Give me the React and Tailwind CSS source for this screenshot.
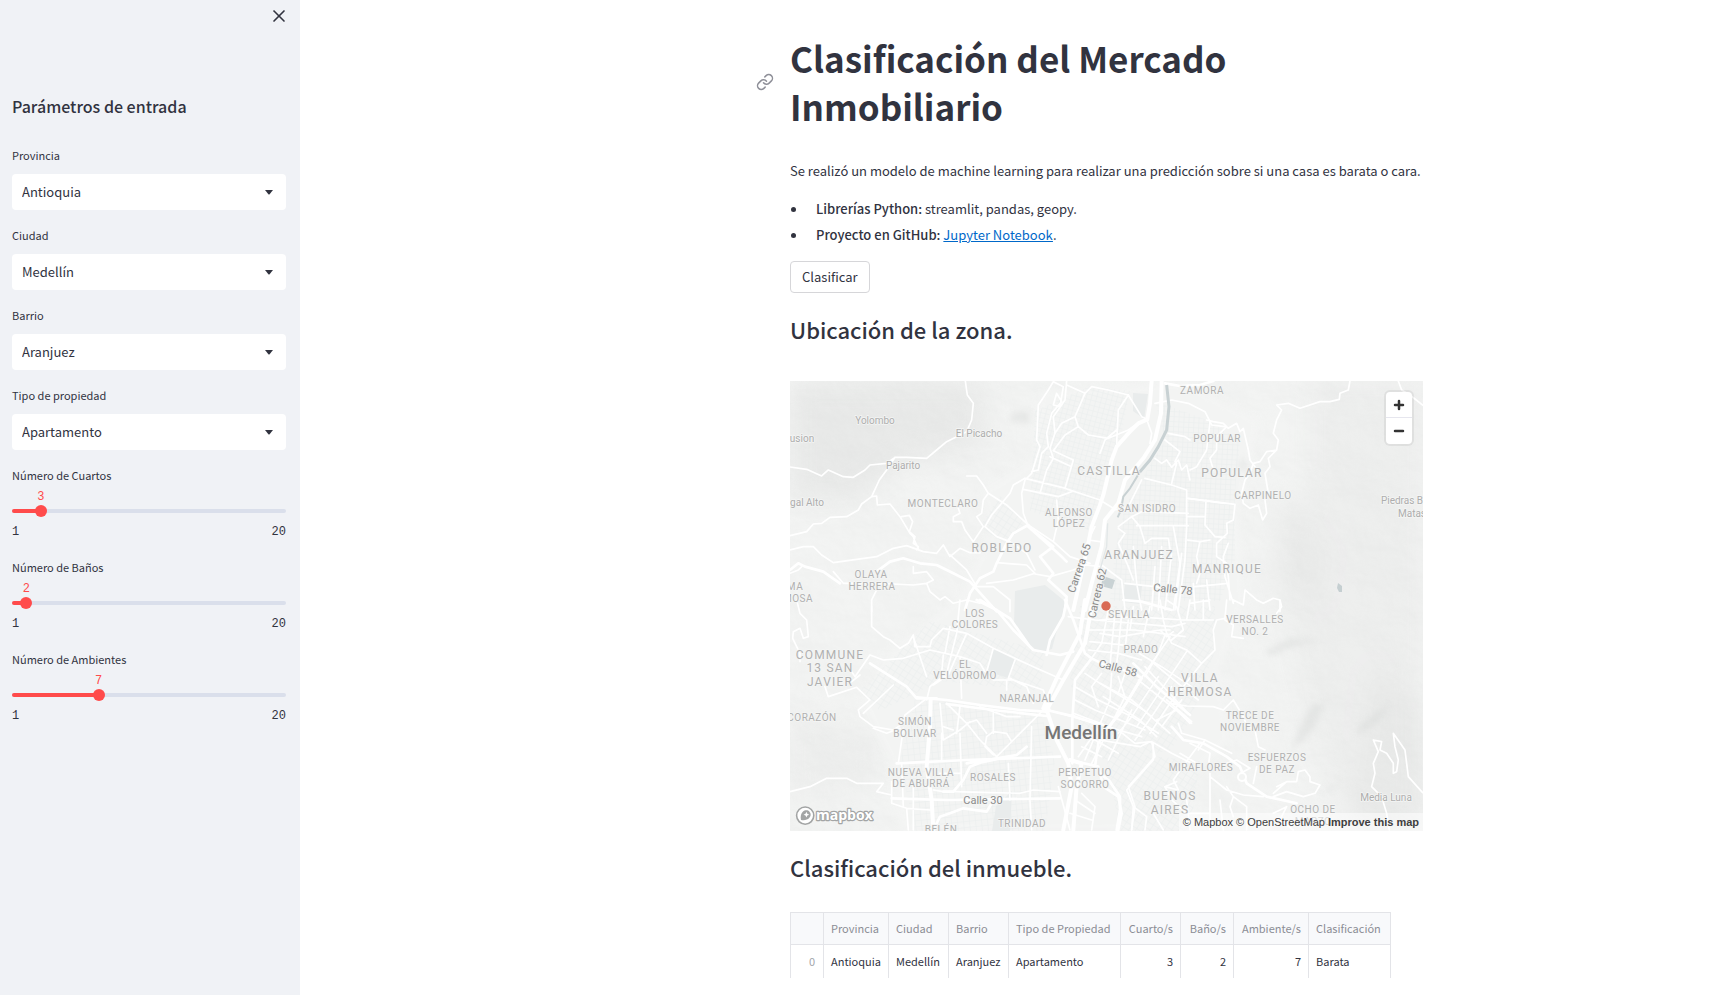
import { useState } from "react";
import { Link, X } from "lucide-react";

const SELECTS = [
  { id: "provincia", label: "Provincia", options: ["Antioquia"] },
  { id: "ciudad", label: "Ciudad", options: ["Medellín"] },
  { id: "barrio", label: "Barrio", options: ["Aranjuez"] },
  { id: "tipo", label: "Tipo de propiedad", options: ["Apartamento"] },
];

const SLIDERS = [
  { id: "cuartos", label: "Número de Cuartos", value: 3 },
  { id: "banos", label: "Número de Baños", value: 2 },
  { id: "ambientes", label: "Número de Ambientes", value: 7 },
];

const COLUMNS = [
  { name: "Provincia", value: "Antioquia", width: "w-[65px]" },
  { name: "Ciudad", value: "Medellín", width: "w-[60px]" },
  { name: "Barrio", value: "Aranjuez", width: "w-[60px]" },
  { name: "Tipo de Propiedad", value: "Apartamento", width: "w-[112px]" },
  { name: "Cuarto/s", value: "3", width: "w-[60px]", numeric: true },
  { name: "Baño/s", value: "2", width: "w-[53px]", numeric: true },
  { name: "Ambiente/s", value: "7", width: "w-[75px]", numeric: true },
  { name: "Clasificación", value: "Barata", width: "w-[82px]" },
];

/* Street network, one sheet per map sector. */
const SHEETS = [
  {
    id: "noroeste",
    transform: "translate(-10 -11) scale(0.3333)",
    minor: [
      "M556 33L562 75L580 100L575 150L560 185L500 215L470 240L440 265L380 262L345 262L320 280L270 285L255 300L220 322L190 320L145 300L125 318L80 298L30 291",
      "M345 262L320 300L298 330L275 380L245 402L235 420L200 440L150 442L125 460L100 462L80 485L30 497",
      "M275 380L290 378L292 405L330 402L360 440L390 490L400 500L405 515L415 535",
      "M365 440L388 436L398 455L388 485L405 500L400 520L415 530L410 540",
      "M30 540L70 530L100 530L125 555L160 578L230 568L290 560L340 535L380 527L430 545L470 550L490 525L510 560L540 535L570 548L600 548",
      "M160 605L190 640L300 640L400 645L440 640L450 665L480 690L495 680L520 700L560 690L600 700",
      "M400 590L400 610L440 605L460 630L440 640",
      "M30 610L55 600L65 590",
      "M275 725L275 690L290 660",
      "M560 318L590 318L610 345L625 370L610 390L605 430L590 440L610 470L580 515L555 480L545 455L520 455L520 440L540 430L535 415",
      "M625 370L680 405L745 465L820 515L870 560L930 580",
      "M735 325L700 345L690 370L665 400L635 435L615 470L650 500L690 515L740 550L765 600",
      "M510 555L560 600L590 650L640 650L690 690L690 725",
      "M650 578L740 585L765 610L700 630L620 640",
      "M765 612L810 620L880 600L930 580",
      "M830 390L835 450L820 515",
    ],
    major: [
      "M30 600L55 580L75 590L130 605L180 640",
      "M290 605L330 575L370 565L420 580L470 585L520 610L570 635L610 680L650 724",
      "M745 465L700 490L680 520L650 580L640 605L600 625L570 670L555 720",
    ],
  },
  {
    id: "castilla",
    transform: "translate(195 -1) scale(0.3333)",
    minor: [
      "M205 5L190 30L160 75L155 180L165 200L140 280L120 300L110 340L115 400L130 440",
      "M205 5L235 20L225 80L205 75L215 40L230 65L200 100L185 160L190 200L170 220L160 270L140 275",
      "M245 3L240 60L205 110L210 160L195 205L205 235L185 270L165 340",
      "M205 212L265 240L240 325",
      "M195 230L255 258",
      "M205 212L240 165L280 140L270 110L230 130L210 160",
      "M280 140L310 165L370 175L430 150L465 125",
      "M300 40L320 20L370 30L430 45",
      "M245 15L300 40L270 110",
      "M430 45L400 90L395 190",
      "M120 295L230 322L345 360L385 385",
      "M115 328L220 350L260 335",
      "M430 45L470 110L487 118",
      "M395 150L360 180L345 220",
      "M485 118L500 160L495 190",
      "M510 70L560 60L610 70L660 95L680 135L720 140",
      "M550 160L600 170L615 180",
      "M540 180L585 215L570 245",
      "M480 295L560 315L605 330L605 440L600 540L580 690",
      "M510 235L530 250L545 240L560 262L580 240L590 270L605 255L615 300",
      "M560 310L575 250",
      "M385 390L420 385L435 370L470 300",
      "M400 440L440 410L470 395L610 400",
      "M455 437L610 437",
      "M400 445L420 460L400 490L430 560L445 600",
      "M440 410L465 440L480 490L500 475L550 475L560 540",
      "M350 555L410 600L420 690",
      "M420 610L510 620L580 630",
      "M445 500L455 610L470 690",
      "M510 560L500 690",
      "M530 500L520 690",
      "M560 520L540 690",
      "M590 520L570 690",
      "M610 355L720 370",
      "M310 480L345 485M300 555L350 560M330 440L315 470",
    ],
    major: [
      "M130 440L225 525L245 545",
      "M130 440L205 500L165 530L205 580L190 600L245 650L240 690",
      "M415 660L470 665L560 690",
    ],
    trunk: [
      "M500 2L495 70L487 118L460 130L430 160L395 200L380 240L355 345L345 375L320 440L310 490L285 600L265 690",
      "M530 2L528 100L510 180L475 235L420 300L400 370L360 420L350 500L320 610L300 690",
    ],
  },
  {
    id: "noreste",
    transform: "translate(310 -11) scale(0.3333)",
    minor: [
      "M750 33L745 60L720 70L718 88L690 95L660 95L600 115L565 100L530 105L545 120L530 150L520 190L535 210L530 240L505 265L510 290L495 310L505 370L495 390L500 430L488 450",
      "M530 240L500 245L480 275L460 280L450 310L435 330L425 370L430 400L450 415L475 405L488 450",
      "M895 33L905 60L930 75L968 105",
      "M320 150L340 155L370 160L385 175L410 160L420 185L430 175L445 240L450 270L465 290",
      "M330 155L320 240L290 290L270 300",
      "M380 170L350 200L350 240L330 265L340 300",
      "M262 385L405 403L400 450L380 460L382 490L350 520L350 560L380 580L385 620L390 690",
      "M318 390L315 465L345 500L375 502",
      "M262 510L300 515L330 510",
      "M262 440L315 440",
      "M300 515L290 560L300 610L290 640",
      "M220 470L240 580L220 720",
      "M385 520L370 560L375 620L400 700",
      "M400 690L430 705L435 660L470 690L490 700L520 685L540 690L540 725",
      "M320 630L330 720M280 640L285 720M285 650L385 640M270 700L330 690",
    ],
    major: ["M195 40L240 48L300 45L340 33"],
  },
  {
    id: "suroeste",
    transform: "translate(-10 219) scale(0.3333)",
    minor: [
      "M50 0L60 40L80 60L85 110L70 115L60 85L40 95L38 115L60 160L60 185",
      "M275 20L275 80L310 110L330 120L360 145L385 130L400 105L405 140L450 140L455 120L490 85L560 100L640 145L760 200L850 240",
      "M270 165L310 180L370 175L450 150L540 170L600 190L612 210",
      "M270 165L225 230L215 215M215 245L240 225",
      "M145 290L230 262L270 300L235 330L240 350L280 380L340 390L370 370L375 345L440 295",
      "M280 385L320 400L360 385",
      "M145 290L135 260M340 255L250 340",
      "M540 0L530 100L500 220L450 260L440 300",
      "M510 80L495 160M560 100L520 190L505 225L460 255",
      "M400 110L440 230M540 170L545 295M490 165L485 220",
      "M500 310L560 370L600 420L650 470L700 420L740 380L790 330",
      "M560 370L590 360L620 400M640 395L620 410L615 440L640 465M640 395L680 400L695 425",
      "M480 310L490 420L540 390L570 365M490 380L520 390M540 320L530 400",
      "M370 385L355 490M485 400L485 480M540 400L545 560",
      "M335 545L335 610L380 625L450 630",
      "M30 575L90 560L140 535L200 535L230 550L310 550L290 575L335 585L335 610",
      "M520 575L720 580L760 570L840 575",
      "M685 490L690 600M755 380L750 600L755 690M380 625L385 690M365 490L370 620M400 560L400 690",
      "M680 240L680 270M610 210L640 240L700 240L790 270L810 330M690 235L740 260L760 310",
      "M640 330L640 400M600 320L680 350L720 350",
      "M480 520L540 520M460 570L490 575L520 575",
      "M705 180L685 235M640 145L620 215",
    ],
    major: [
      "M270 190L380 260L410 295L470 295",
      "M410 292L500 300L600 315L720 330L800 335",
      "M500 312L640 330L800 348",
      "M350 490L560 480L840 470",
      "M335 595L500 600L840 595",
      "M560 490L650 475L710 465L740 440",
      "M650 478L600 488L570 500L550 540L520 575L490 575",
      "M460 690L480 650L510 640L550 625L620 635L635 610",
      "M590 0L650 30L700 90L760 150L840 165L880 155",
      "M600 0L690 55L750 140",
      "M860 0L850 50L810 120L800 165",
    ],
    trunk: ["M452 300L450 380L440 500L455 600L460 690"],
  },
  {
    id: "centro",
    transform: "translate(195 219) scale(0.3333)",
    minor: [
      "M370 30L350 130L320 175M390 40L380 140L375 200M410 40L400 150L395 190M430 60L420 150",
      "M310 90L450 90L600 110M315 125L420 135L530 200L620 260M540 105L520 160L480 230",
      "M250 50L330 60L560 80L600 70M310 150L400 160L470 180",
      "M460 240L560 320L620 370M480 200L600 330M500 185L640 300",
      "M350 220L320 260L340 320M300 220L345 250L440 300L500 350",
      "M380 220L375 300L300 480M400 230L420 290L320 490M440 330L370 480M350 370L280 470",
      "M270 260L340 300L440 350L520 400M270 300L330 330L480 390M265 340L400 390L470 410",
      "M420 220L400 280M520 230L440 350L400 400M560 260L500 350L450 420M590 300L530 380",
      "M255 400L330 420L400 460M290 440L350 470",
      "M190 330L330 370L400 390L450 430L500 425L560 460L620 490",
      "M500 425L510 470L430 560L450 620L440 690",
      "M560 600L540 560L575 545M660 420L640 450",
      "M290 580L330 620L320 690M270 600L330 640M255 640L320 660M220 560L255 690",
      "M580 370L590 400L660 420L740 460",
    ],
    major: [
      "M240 0L265 60L300 160L320 175L270 240L262 360L262 490",
      "M320 175L360 195L450 220L470 235L430 300L380 370L340 430L330 500",
      "M255 480L340 500L355 560L400 590L410 640L400 690",
      "M185 330L270 350L330 370",
    ],
    trunk: [
      "M300 0L285 100L215 235L175 325",
      "M320 20L300 130L235 240L185 330L215 420L250 490L260 560L235 690",
      "M255 480L290 490L275 560L265 690",
    ],
  },
  {
    id: "sureste",
    transform: "translate(310 219) scale(0.3333)",
    minor: [
      "M180 0L190 60L200 100L215 130L260 150L305 190L345 150L340 90L350 60L375 55L380 0",
      "M200 0L230 20L250 90L215 120M220 95L200 110L180 90L210 90M270 0L260 60M310 0L310 60",
      "M375 60L400 75L395 110L430 115M540 0L545 20L530 40",
      "M150 20L130 110M100 20L90 90M0 60L100 50L250 60L340 60M0 100L60 110L180 90",
      "M260 155L170 290L110 380M305 190L210 310L150 400M210 110L120 240",
      "M0 250L130 330L210 400M10 290L120 360L170 410",
      "M210 310L260 318L340 320L370 330L400 300L430 350L440 375L465 390L475 440L495 450",
      "M170 360L230 330L270 370M200 300L275 365",
      "M300 430L270 470L220 540L235 570L195 560",
      "M270 430L330 460L325 500M240 460L290 490",
      "M160 430L160 480L80 570L100 620L95 690M100 620L140 650L135 690",
      "M0 420L60 430L120 440L150 425",
      "M520 580L560 545L530 560M560 545L590 545L595 515L615 510L630 530L630 545L660 555L645 580L610 590L560 575L520 590",
      "M380 560L400 590L390 620L400 650M400 590L440 620L440 690M330 520L330 690M330 530L380 570L430 585L490 590M360 600L370 690",
      "M470 500L460 550M520 640L560 620L540 660L580 690M380 490L410 480L450 505L430 515",
      "M820 420L845 425L840 450L860 460L880 490L880 520L890 515L895 480L885 440L880 400L915 450L925 530L968 578",
      "M820 420L835 455L820 490L825 520L815 560L845 590L860 640L868 690",
      "M160 640L190 690M260 600L270 690M215 600L260 640L330 640",
    ],
    major: [
      "M215 380L250 420L310 430L380 470L420 500L440 550L500 590L590 610",
      "M100 190L170 260L270 345M120 240L60 340L10 400",
      "M0 520L30 545L60 590L60 630L50 690",
    ],
  },
];

const SMALL = [
  [412, 9, "ZAMORA"], [427, 57, "POPULAR"], [473, 114, "CARPINELO"], [357, 127, "SAN ISIDRO"],
  [153, 122, "MONTECLARO"], [279, 131, "ALFONSO"], [279, 142, "LÓPEZ"], [81, 193, "OLAYA"],
  [82, 205, "HERRERA"], [5, 205, "MA"], [8, 217, "MOSA"], [185, 232, "LOS"], [185, 243, "COLORES"],
  [175, 283, "EL"], [175, 294, "VELÓDROMO"], [237, 317, "NARANJAL"], [22, 336, "CORAZÓN"],
  [125, 340, "SIMÓN"], [125, 352, "BOLIVAR"], [131, 391, "NUEVA VILLA"], [131, 402, "DE ABURRÁ"],
  [203, 396, "ROSALES"], [151, 448, "BELÉN"], [232, 442, "TRINIDAD"], [295, 391, "PERPETUO"],
  [295, 403, "SOCORRO"], [339, 233, "SEVILLA"], [351, 268, "PRADO"], [465, 238, "VERSALLES"],
  [465, 250, "NO. 2"], [460, 334, "TRECE DE"], [460, 346, "NOVIEMBRE"], [487, 376, "ESFUERZOS"],
  [487, 388, "DE PAZ"], [411, 386, "MIRAFLORES"], [523, 428, "OCHO DE"], [523, 440, "MARZO"],
];

const MEDIUM = [
  [319, 90, "CASTILLA"], [442, 92, "POPULAR"], [212, 167, "ROBLEDO"], [349, 174, "ARANJUEZ"],
  [437, 188, "MANRIQUE"], [40, 274, "COMMUNE"], [40, 287, "13 SAN"], [40, 301, "JAVIER"],
  [380, 415, "BUENOS"], [380, 429, "AIRES"], [410, 297, "VILLA"], [410, 311, "HERMOSA"],
];

const TOWNS = [
  [85, 39, "Yolombo"], [12, 57, "usion"], [189, 52, "El Picacho"], [113, 84, "Pajarito"],
  [17, 121, "gal Alto"], [612, 119, "Piedras B"], [622, 132, "Matas"], [596, 416, "Media Luna"],
];

const STREETS = [
  [289, 187, -71, "Carrera 65"], [307, 212, -77, "Carrera 62"], [383, 208, 6, "Calle 78"],
  [328, 287, 15, "Calle 58"], [193, 419, 0, "Calle 30"],
];

function StreetGrid({ id, angle, size }) {
  return (
    <pattern id={id} width={size} height={size} patternUnits="userSpaceOnUse" patternTransform={`rotate(${angle})`}>
      <path d={`M0 0H${size}M0 0V${size}`} stroke="#e9eded" strokeWidth="1" fill="none" />
    </pattern>
  );
}

function ZoneMap() {
  return (
    <svg viewBox="0 0 633 450" preserveAspectRatio="xMidYMid slice" className="block h-full w-full" role="img" aria-label="Mapa de Medellín">
      <defs>
        <filter id="relief" x="0" y="0" width="100%" height="100%">
          <feTurbulence type="fractalNoise" baseFrequency="0.014 0.018" numOctaves="5" seed="11" result="n" />
          <feDiffuseLighting in="n" surfaceScale="5" diffuseConstant="1" lightingColor="#ffffff" result="l">
            <feDistantLight azimuth="315" elevation="62" />
          </feDiffuseLighting>
          <feColorMatrix in="l" type="matrix" values="0 0 0 0 0.45  0 0 0 0 0.47  0 0 0 0 0.47  -0.6 0 0 0 0.58" />
        </filter>
        <filter id="soft" x="-50%" y="-50%" width="200%" height="200%">
          <feGaussianBlur stdDeviation="12" />
        </filter>
        <filter id="ridge" x="-50%" y="-50%" width="200%" height="200%">
          <feGaussianBlur stdDeviation="3" />
        </filter>
        <StreetGrid id="gridA" angle={15} size={5} />
        <StreetGrid id="gridB" angle={3} size={5} />
        <StreetGrid id="gridC" angle={33} size={6} />
        <StreetGrid id="gridD" angle={-6} size={6} />
      </defs>
      <rect width="633" height="450" fill="#f3f4f3" />
      <g filter="url(#soft)">
        <path d="M0 0H190L200 60L120 80L60 120H0Z" fill="#e9eae9" />
        <path d="M520 0H633V450H560L530 380L500 260L480 180L520 100Z" fill="#eeefee" />
        <path d="M490 110L540 170L530 230L500 200Z" fill="#e9eae9" />
        <path d="M0 330L90 350L90 400L0 420Z" fill="#eeefee" />
        <path d="M580 280L633 320V450H560Z" fill="#e9eae9" />
      </g>
      <rect width="633" height="450" filter="url(#relief)" opacity="0.4" />
      <path d="M250 10L395 0L470 40L450 130L455 220L430 290L440 360L400 400L410 450H110L100 380L70 320L100 270L170 215L200 150L190 110L240 80Z" fill="#f4f5f4" opacity="0.8" filter="url(#ridge)" />
      <g filter="url(#ridge)" fill="#d3d5d4" opacity="0.4">
        <path d="M222 32L240 30L238 42L220 40Z" />
        <path d="M475 270L500 258L530 260L500 266L480 275Z" />
        <path d="M520 325L535 322L525 345L515 358L500 370Z" />
        <path d="M570 345L598 322L590 340L565 355Z" />
        <path d="M550 390L545 408L530 412L548 402Z" />
        <path d="M455 75L458 92L448 85Z" />
      </g>
      <path d="M245 30L300 5L340 10L330 60L300 150L240 130Z" fill="url(#gridA)" />
      <path d="M210 115L235 142L215 165L190 145Z" fill="url(#gridC)" />
      <path d="M365 20L420 40L450 60L445 110L445 180L430 220L320 220L325 170L335 125L375 60Z" fill="url(#gridB)" />
      <path d="M140 240L255 270L250 310L150 300L90 330L70 310Z" fill="url(#gridC)" />
      <path d="M110 380L125 318L250 330L265 380L255 450H125Z" fill="url(#gridD)" />
      <path d="M290 225L425 225L425 270L400 340L380 370L300 380L280 300Z" fill="url(#gridC)" />
      <path d="M315 370L410 380L400 450H330Z" fill="url(#gridC)" />
      <g fill="#e9ecec">
        <path d="M225 210L255 204L277 222L268 245L262 268L250 272L238 262L224 243Z" />
        <path d="M203 267L225 279L218 297L197 290Z" />
        <path d="M343 12L358 13L354 38L343 30Z" />
        <path d="M335 203L352 205L350 223L333 221Z" />
        <path d="M206 425L222 410L220 450H202Z" />
      </g>
      <path d="M313 195L325 199L322 208L311 205Z" fill="#c9d2d4" />
      <path d="M548 202L552 205L552 211L549 211L547 207Z" fill="#c5cfd1" />
      {SHEETS.map((s) => (
        <g key={s.id} transform={s.transform} fill="none" stroke="#ffffff" strokeLinejoin="round" strokeLinecap="round">
          <path d={s.minor.join("")} strokeWidth="5" />
          <path d={s.major.join("")} strokeWidth="8" />
          {s.trunk && <path d={s.trunk.join("")} strokeWidth="12" />}
        </g>
      ))}
      <g transform="translate(195 -1) scale(0.3333)" fill="none" stroke="#c8d1d3" strokeLinejoin="round">
        <path d="M545 15L552 80L545 150L520 200L495 240L465 275" strokeWidth="9" />
        <path d="M465 275L435 325L415 350L408 390L398 412" strokeWidth="6" />
        <path d="M368 430L365 500L345 570" strokeWidth="4" stroke="#e2e7e8" />
      </g>
      <circle cx="452" cy="396" r="4" fill="#f3f4f3" stroke="#fff" strokeWidth="2" />
      <g textAnchor="middle" fontFamily="Roboto, 'Liberation Sans', sans-serif" stroke="#f5f6f5" strokeWidth="1.5" strokeLinejoin="round" paintOrder="stroke">
        <g fontSize="10" fill="#b0b0b0" className="tracking-wider">
          {SMALL.map(([x, y, t]) => <text key={`${x}-${y}`} x={x} y={y + 4}>{t}</text>)}
        </g>
        <g fontSize="12" fill="#b0b0b0" className="tracking-widest">
          {MEDIUM.map(([x, y, t]) => <text key={`${x}-${y}`} x={x} y={y + 4}>{t}</text>)}
        </g>
        <g fontSize="10" fill="#adadad">
          {TOWNS.map(([x, y, t]) => <text key={t} x={x} y={y + 4}>{t}</text>)}
        </g>
        <g fontSize="11" fill="#8a8a8a">
          {STREETS.map(([x, y, r, t]) => (
            <text key={t} x={x} y={y + 4} transform={`rotate(${r} ${x} ${y})`}>{t}</text>
          ))}
        </g>
        <text x="291" y="358" fontSize="19" fontWeight="500" fill="#757575">Medellín</text>
      </g>
      <circle cx="316" cy="225" r="4.7" fill="#d96a55" />
    </svg>
  );
}

function MapboxMark() {
  return (
    <a href="https://www.mapbox.com/" aria-label="Mapbox" className="absolute bottom-1 left-1 block">
      <svg width="82" height="23" viewBox="0 0 82 23" className="block">
        <circle cx="11.2" cy="11.6" r="8.6" fill="#fff" stroke="#a3a5a5" strokeWidth="1.6" />
        <path d="M7 16C6.2 12.4 7 9.6 8.8 7.8C11 5.7 14 6 15.5 7.7C17.2 9.5 17.1 12.2 15.2 14.1C13.4 15.9 10.6 16.7 7 16Z" fill="#a3a5a5" />
        <path d="M12.4 7.8L13.3 9.8L15.2 10.7L13.3 11.6L12.4 13.5L11.5 11.6L9.6 10.7L11.5 9.8Z" fill="#fff" />
        <text x="22" y="16" fontFamily="'Open Sans', sans-serif" fontSize="14" fontWeight="700" fill="#fff" stroke="#a3a5a5" strokeWidth="2.4" strokeLinejoin="round" paintOrder="stroke">mapbox</text>
      </svg>
    </a>
  );
}

function SelectField({ id, label, options }) {
  return (
    <div className="mb-[15px]">
      <label htmlFor={id} className="mb-[9px] block text-[11px] leading-5">{label}</label>
      <div className="relative">
        <select id={id} className="block h-9 w-full appearance-none rounded bg-white pr-8 pl-2.5 text-[13px] text-[#31333f] outline-none">
          {options.map((o) => <option key={o}>{o}</option>)}
        </select>
        <svg viewBox="0 0 8 5" className="pointer-events-none absolute top-4 right-[13px] h-[5px] w-2" aria-hidden="true">
          <path d="M0 0H8L4.6 4.2Q4 4.8 3.4 4.2Z" fill="#31333f" />
        </svg>
      </div>
    </div>
  );
}

function SliderField({ id, label, initial }) {
  const [value, setValue] = useState(initial);
  const at = `${((value - 1) / 19) * 100}%`;
  return (
    <div className="mb-[17px]">
      <label htmlFor={id} className="mb-1 block text-[11px] leading-5">{label}</label>
      <div className="relative h-4 font-['Liberation_Mono',monospace] text-xs leading-4 text-[#ff4b4b]">
        <output htmlFor={id} className="absolute -translate-x-1/2" style={{ left: at }}>{value}</output>
      </div>
      <div className="relative mt-1 h-1 rounded-full bg-[#dadfeb]">
        <div className="h-1 rounded-full bg-[#ff4b4b]" style={{ width: at }} />
        <input
          id={id}
          type="range"
          min="1"
          max="20"
          value={value}
          onChange={(e) => setValue(Number(e.target.value))}
          className="absolute -top-1 -left-1.5 h-3 w-[calc(100%+12px)] appearance-none bg-transparent outline-none [&::-webkit-slider-thumb]:h-3 [&::-webkit-slider-thumb]:w-3 [&::-webkit-slider-thumb]:appearance-none [&::-webkit-slider-thumb]:rounded-full [&::-webkit-slider-thumb]:bg-[#ff4b4b]"
        />
      </div>
      <div className="mt-[11px] flex justify-between font-['Liberation_Mono',monospace] text-xs leading-4">
        <span>1</span>
        <span>20</span>
      </div>
    </div>
  );
}

export default function App() {
  return (
    <div className="flex min-h-screen bg-white font-['Noto_Sans_CJK_SC',sans-serif] text-[13px] text-[#31333f]">
      <aside className="w-[300px] shrink-0 bg-[#f0f2f6] pr-3.5 pl-3">
        <div className="flex justify-end pt-1.5">
          <button type="button" aria-label="Cerrar panel" className="-mr-[3px] block">
            <X size={20} strokeWidth={2} />
          </button>
        </div>
        <h2 className="mt-[68px] mb-[27px] text-base leading-6 font-medium">Parámetros de entrada</h2>
        {SELECTS.map((s) => <SelectField key={s.id} {...s} />)}
        {SLIDERS.map((s) => <SliderField key={s.id} id={s.id} label={s.label} initial={s.value} />)}
      </aside>

      <main className="grid flex-1 grid-cols-[490fr_minmax(0,633px)_287fr] content-start">
        <div className="col-start-2 pt-[34px]">
          <div className="relative">
            <a href="#clasificacion-del-mercado-inmobiliario" aria-label="Enlace a esta sección" className="absolute top-1/2 right-full mr-4 -translate-y-1/2 text-[#8f9099]">
              <Link size={18} strokeWidth={2} />
            </a>
            <h1 id="clasificacion-del-mercado-inmobiliario" className="text-[35px] leading-[48px] font-bold">Clasificación del Mercado Inmobiliario</h1>
          </div>
          <p className="mt-[29px] leading-6">Se realizó un modelo de machine learning para realizar una predicción sobre si una casa es barata o cara.</p>
          <ul className="mt-[13px] leading-[26px]">
            <li className="flex items-center gap-5 before:ml-px before:size-[5px] before:rounded-full before:bg-[#31333f]">
              <span><strong className="font-medium">Librerías Python:</strong> streamlit, pandas, geopy.</span>
            </li>
            <li className="flex items-center gap-5 before:ml-px before:size-[5px] before:rounded-full before:bg-[#31333f]">
              <span><strong className="font-medium">Proyecto en GitHub:</strong> <a href="#notebook" className="text-[#0068c9] underline">Jupyter Notebook</a>.</span>
            </li>
          </ul>
          <button type="button" className="mt-[13px] block h-8 rounded border border-[#d6d6d9] px-[11px] leading-5">Clasificar</button>
          <h2 className="mt-5 text-[22px] leading-8 font-medium">Ubicación de la zona.</h2>
          <div className="relative mt-9 h-[450px] overflow-hidden">
            <ZoneMap />
            <div className="absolute top-[11px] right-[11px] flex flex-col rounded bg-white shadow-[0_0_0_2px_rgba(0,0,0,0.06)]">
              <button type="button" aria-label="Acercar" className="flex size-[26px] items-center justify-center border-b border-[#e6e6ee]">
                <svg width="12" height="12" viewBox="0 0 12 12"><path d="M6 2V10M2 6H10" stroke="#333" strokeWidth="2.5" strokeLinecap="round" /></svg>
              </button>
              <button type="button" aria-label="Alejar" className="flex size-[26px] items-center justify-center">
                <svg width="12" height="12" viewBox="0 0 12 12"><path d="M2 6H10" stroke="#333" strokeWidth="2.5" strokeLinecap="round" /></svg>
              </button>
            </div>
            <MapboxMark />
            <div className="absolute right-0 bottom-0 flex h-[18px] items-center gap-[3px] bg-white/50 px-1 font-['Liberation_Sans',sans-serif] text-[11px] text-[#404040]">
              <a href="https://www.mapbox.com/about/maps/">© Mapbox</a>
              <a href="https://www.openstreetmap.org/copyright">© OpenStreetMap</a>
              <a href="https://www.mapbox.com/map-feedback/" className="font-bold">Improve this map</a>
            </div>
          </div>
          <h2 className="mt-5 text-[22px] leading-8 font-medium">Clasificación del inmueble.</h2>
          <table className="mt-[29px] w-[601px] table-fixed border-collapse border-x border-t border-[#e3e4e8] text-[11px]">
            <thead>
              <tr className="h-8 border-b border-[#e3e4e8] bg-[#f8f9fb] text-[#8b8d95]">
                <th className="w-[33px]" aria-label="Índice" />
                {COLUMNS.map((c) => (
                  <th key={c.name} scope="col" className={`${c.width} border-l border-[#e3e4e8] px-[7px] font-normal whitespace-nowrap ${c.numeric ? "text-right" : "text-left"}`}>{c.name}</th>
                ))}
              </tr>
            </thead>
            <tbody>
              <tr className="h-[33px]">
                <th scope="row" className="px-2 text-right font-normal text-[#a3a5ab]">0</th>
                {COLUMNS.map((c) => (
                  <td key={c.name} className={`border-l border-[#e3e4e8] px-[7px] whitespace-nowrap ${c.numeric ? "text-right" : ""}`}>{c.value}</td>
                ))}
              </tr>
            </tbody>
          </table>
        </div>
      </main>
    </div>
  );
}
